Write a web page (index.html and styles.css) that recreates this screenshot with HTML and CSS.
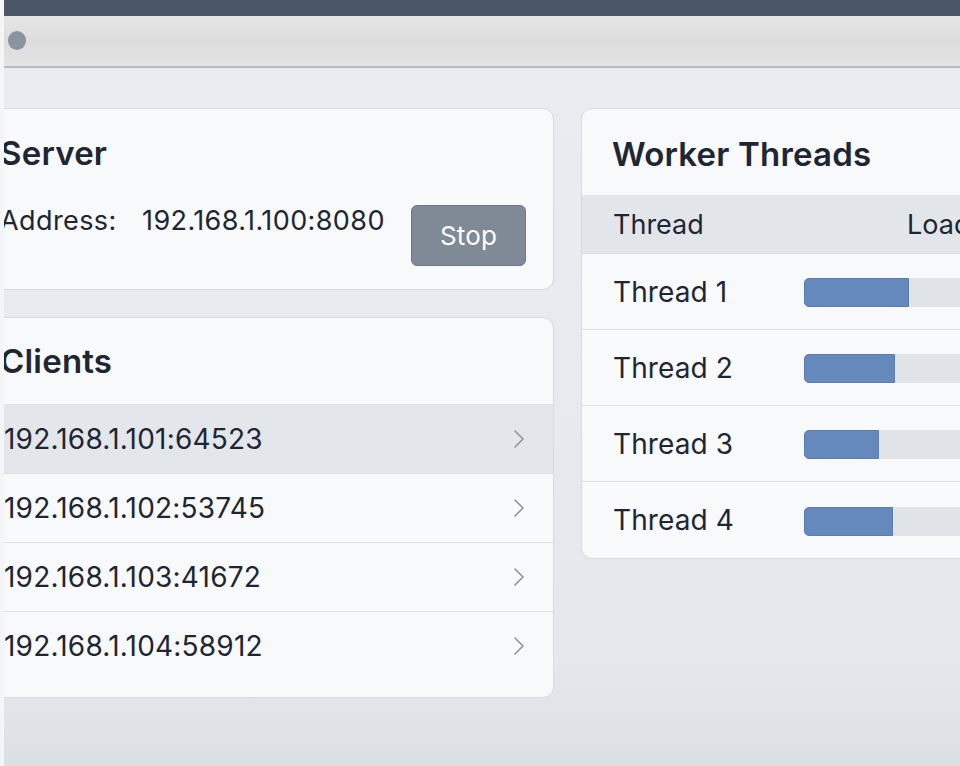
FILE: index.html
```html
<!DOCTYPE html>
<html>
<head>
<meta charset="utf-8">
<link rel="stylesheet" href="styles.css">
</head>
<body>
<div class="window">
  <div class="topbar"></div>
  <div class="titlebar"><span class="dot"></span></div>
  <main class="content">
    <div class="col">
      <section class="card server">
        <h2 class="title">Server</h2>
        <div class="addr-row">
          <span class="label">Address:</span>
          <span class="value">192.168.1.100:8080</span>
          <button class="btn">Stop</button>
        </div>
      </section>
      <section class="card clients">
        <h2 class="title clients-title">Clients</h2>
        <ul class="list">
          <li class="item active"><span>192.168.1.101:64523</span><svg class="chev" viewBox="0 0 14 20" width="14" height="20"><path d="M3 2l8 8-8 8" fill="none" stroke="currentColor" stroke-width="1.6" stroke-linecap="round" stroke-linejoin="round"/></svg></li>
          <li class="item"><span>192.168.1.102:53745</span><svg class="chev" viewBox="0 0 14 20" width="14" height="20"><path d="M3 2l8 8-8 8" fill="none" stroke="currentColor" stroke-width="1.6" stroke-linecap="round" stroke-linejoin="round"/></svg></li>
          <li class="item"><span>192.168.1.103:41672</span><svg class="chev" viewBox="0 0 14 20" width="14" height="20"><path d="M3 2l8 8-8 8" fill="none" stroke="currentColor" stroke-width="1.6" stroke-linecap="round" stroke-linejoin="round"/></svg></li>
          <li class="item"><span>192.168.1.104:58912</span><svg class="chev" viewBox="0 0 14 20" width="14" height="20"><path d="M3 2l8 8-8 8" fill="none" stroke="currentColor" stroke-width="1.6" stroke-linecap="round" stroke-linejoin="round"/></svg></li>
        </ul>
      </section>
    </div>
    <section class="card workers">
      <h2 class="title workers-title">Worker Threads</h2>
      <div class="thead">
        <span class="th-name">Thread</span>
        <span class="th-load">Load</span>
      </div>
      <div class="trow"><span class="tname">Thread 1</span><div class="track"><div class="fill" style="width:105px"></div></div></div>
      <div class="trow"><span class="tname">Thread 2</span><div class="track"><div class="fill" style="width:91px"></div></div></div>
      <div class="trow"><span class="tname">Thread 3</span><div class="track"><div class="fill" style="width:75px"></div></div></div>
      <div class="trow last"><span class="tname">Thread 4</span><div class="track"><div class="fill" style="width:89px"></div></div></div>
    </section>
  </main>
</div>
</body>
</html>
```

FILE: styles.css
```css
* { box-sizing: border-box; }
html, body { margin: 0; padding: 0; }
body {
  background: #f4f5f6;
  font-family: Inter, "Noto Sans", "Liberation Sans", sans-serif;
  color: #1e2633;
}
.window {
  margin-left: 4px;
  width: 956px;
  height: 766px;
  overflow: hidden;
  background: linear-gradient(#e9ecf0 0%, #e5e8ec 85%, #dcdfe3 100%);
}
.topbar {
  height: 16px;
  background: #4a5566;
}
.titlebar {
  height: 52px;
  background: linear-gradient(#e6e6e6, #dddddd 50%, #e4e4e4);
  border-bottom: 2px solid #b8bcc1;
  display: flex;
  align-items: center;
  padding-left: 4px;
}
.dot {
  width: 18px;
  height: 19px;
  border-radius: 50%;
  background: #8a949f;
  margin-top: -1px;
}
.content {
  display: grid;
  grid-template-columns: 586px 586px;
  column-gap: 27px;
  align-items: start;
  margin: 40px 0 0 -36px;
  width: 1200px;
}
.col {
  display: flex;
  flex-direction: column;
  gap: 27px;
}
.card {
  background: #f8f9fa;
  border: 1px solid #d6dae0;
  border-radius: 11px;
  overflow: hidden;
}
.title {
  margin: 0;
  font-size: 33px;
  font-weight: 600;
  line-height: 40px;
  letter-spacing: 0.2px;
}
.server {
  padding: 24px 27px 24px 31px;
  height: 182px;
}
.addr-row {
  display: flex;
  align-items: flex-start;
  margin-top: 28px;
  font-size: 27px;
  line-height: 40px;
  letter-spacing: 0.4px;
}
.label { width: 142px; }
.btn {
  margin-left: auto;
  margin-top: 4px;
  width: 115px;
  height: 61px;
  background: #7f8a96;
  border: 1px solid #6f7985;
  border-radius: 6px;
  color: #fff;
  font-family: inherit;
  font-size: 26px;
  letter-spacing: 0.2px;
  padding: 0;
}
.clients {
  height: 381px;
}
.clients-title {
  padding: 23px 31px 23px;
}
.list {
  list-style: none;
  margin: 0;
  padding: 0;
}
.item {
  height: 69px;
  display: flex;
  align-items: center;
  justify-content: space-between;
  padding: 0 27px 0 35px;
  font-size: 28px;
  letter-spacing: 0.2px;
  border-top: 1px solid #dde1e6;
}
.item.active {
  background: #e3e6ea;
}
.chev {
  color: #8b939d;
}
.workers {
  height: 451px;
}
.workers-title {
  padding: 25px 30px 21px;
}
.thead {
  height: 59px;
  background: #e2e6ea;
  display: flex;
  align-items: center;
  font-size: 27px;
  padding-left: 31px;
  border-bottom: 1px solid #d8dce1;
}
.th-name { width: 294px; }
.trow {
  height: 76px;
  display: flex;
  align-items: center;
  font-size: 28px;
  letter-spacing: 0.1px;
  padding-left: 31px;
  border-bottom: 1px solid #dde1e6;
}
.trow.last { border-bottom: none; }
.tname { width: 191px; }
.track {
  width: 330px;
  height: 29px;
  background: #e0e3e7;
  border-radius: 5px;
  margin-top: 2px;
  display: flex;
}
.fill {
  height: 100%;
  background: #6589bb;
  border: 1px solid #5a7db0;
  border-radius: 5px 0 0 5px;
}
```
